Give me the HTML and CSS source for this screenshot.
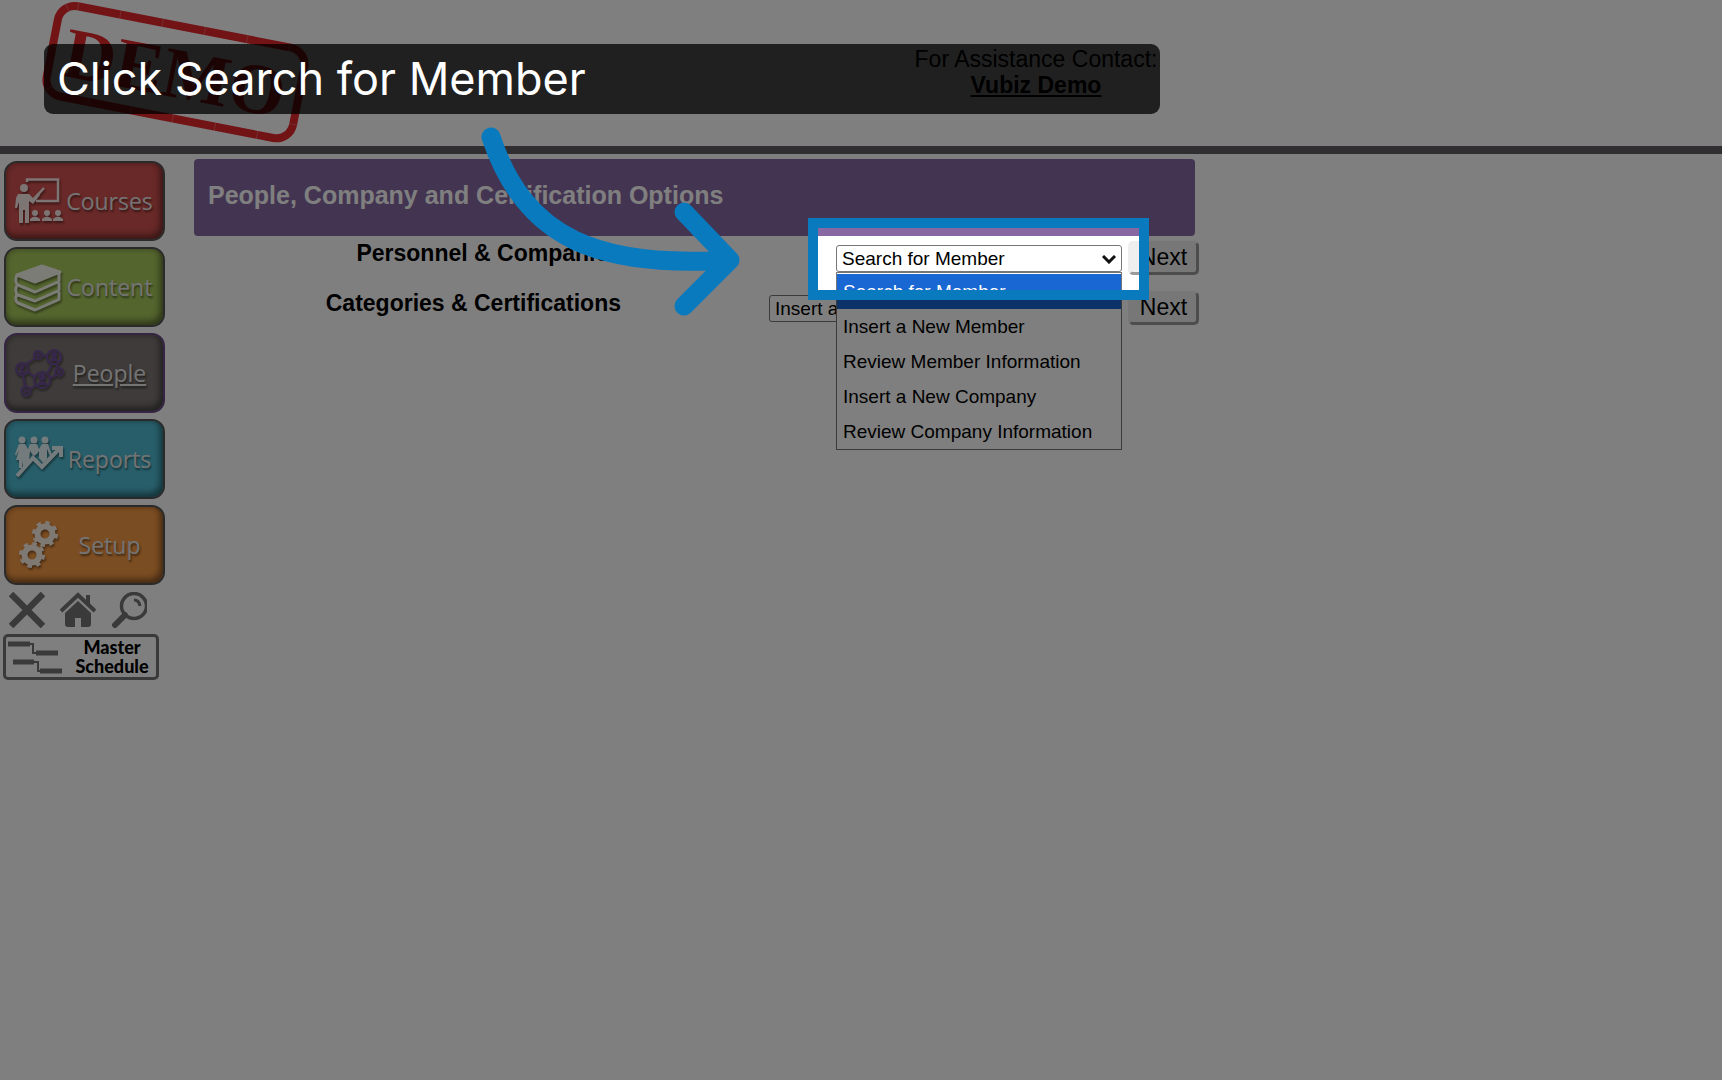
FILE: index.html
```html
<!DOCTYPE html>
<html lang="en">
<head>
<meta charset="utf-8">
<title>People, Company and Certification Options</title>
<link rel="stylesheet" href="styles.css">
</head>
<body>
<header class="topbar">
  <svg class="stamp" viewBox="0 0 320 146" role="img" aria-label="Demo">
    <g transform="rotate(11 175 72)">
      <rect x="50" y="26" width="251" height="92" rx="17" fill="none" stroke="#e4262c" stroke-width="8"/>
      <rect x="50" y="26" width="251" height="92" rx="17" fill="none" stroke="#fff" stroke-width="8" stroke-dasharray="1 42" opacity=".25"/>
      <text x="175" y="97" class="stamp-text" text-anchor="middle">DEMO</text>
    </g>
  </svg>
  <div class="contact">For Assistance Contact:<a href="#">Vubiz Demo</a></div>
</header>

<div class="layout">
  <nav class="side">
    <a class="tile red" href="#">
      <svg viewBox="0 0 50 50"><g fill="none" stroke="#fff" stroke-width="2.500"><path d="M13 6V3.500H44V25H22M18 25L30 12" /></g><g fill="#fff"><circle cx="10" cy="12" r="4"/><path d="M4 18H15L19 22L24 17L26 19L19 28L15 25V47H11V34H9V47H5V26L3 32H1L2 22Z"/><circle cx="21" cy="37" r="3"/><circle cx="33" cy="37" r="3"/><circle cx="44" cy="37" r="3"/><path d="M16 45V43Q21 38 26 43V45ZM28 45V43Q33 38 38 43V45ZM39 45V43Q44 38 49 43V45Z"/></g></svg>
      <span>Courses</span></a>
    <a class="tile green" href="#">
      <svg viewBox="0 0 50 50"><g fill="none" stroke="#fff" stroke-width="3" stroke-linejoin="round"><path fill="#fff" d="M3 13L28 4L46 10L21 20Z"/><path d="M3 13Q0 20 4 23L21 30L46 19M3 23Q0 30 4 33L21 39L46 28M3 32Q0 38 4 41L21 48L46 37M45 11V19M45 21V28M45 30V37"/></g></svg>
      <span>Content</span></a>
    <a class="tile dark" href="#" aria-current="page">
      <svg viewBox="0 0 50 50"><g fill="none" stroke="#6f499f" stroke-width="2"><circle cx="8" cy="21" r="6"/><circle cx="24" cy="7" r="4"/><circle cx="40" cy="9" r="7"/><circle cx="45" cy="24" r="4"/><circle cx="28" cy="32" r="8"/><circle cx="12" cy="43" r="4.500"/><path d="M12 16L21 10M28 7L33 8M42 16L44 20M14 24L21 29M9 27L11 38M16 41L22 37M33 26L38 16M36 30L42 27"/></g><g fill="#6f499f"><circle cx="8" cy="19" r="2.500"/><path d="M4 25Q8 19 12 25Z"/><circle cx="40" cy="7" r="3"/><path d="M35 13Q40 6 45 13Z"/><circle cx="28" cy="29" r="3.500"/><path d="M22 37Q28 29 34 37Z"/><circle cx="24" cy="7" r="2"/><circle cx="45" cy="24" r="2"/><circle cx="12" cy="43" r="2"/></g></svg>
      <span>People</span></a>
    <a class="tile blue" href="#">
      <svg viewBox="0 0 50 50"><g fill="#fff"><circle cx="8" cy="6" r="3.500"/><circle cx="20" cy="6" r="3.500"/><circle cx="31" cy="6" r="3.500"/><path d="M5 10H11L14 15L16 10H23L25 15L28 10H34L38 21L36 22L33 15V25L29 29L25 24V17L23 20L20 22L18 20L16 17L15 28L11 34H9V27L8 34H5V26H2L5 16L2 22L1 20Z"/></g><path d="M3 42L19 24L28 33L46 14M38 14H47V23" fill="none" stroke="#fff" stroke-width="4"/></svg>
      <span>Reports</span></a>
    <a class="tile orange" href="#">
      <svg viewBox="0 0 50 50"><g fill="none" stroke="#fff"><circle cx="31" cy="14" r="7.500" stroke-width="6"/><circle cx="31" cy="14" r="11" stroke-width="4" stroke-dasharray="4.320 4.320"/><circle cx="18" cy="35" r="7.500" stroke-width="6"/><circle cx="18" cy="35" r="11" stroke-width="4" stroke-dasharray="4.320 4.320"/></g></svg>
      <span>Setup</span></a>
    <div class="tools">
      <button type="button" aria-label="Close"><svg viewBox="0 0 36 36"><path d="M2 2L34 34M34 2L2 34" stroke="#777575" stroke-width="6.500"/></svg></button>
      <button type="button" aria-label="Home"><svg viewBox="0 0 36 36"><path d="M1 19L18 3L35 19M28 3V12" fill="none" stroke="#777575" stroke-width="4"/><path d="M5 21L18 9L31 21V32Q31 35 28 35H21V26H15V35H8Q5 35 5 32Z" fill="#777575"/></svg></button>
      <button type="button" aria-label="Search"><svg viewBox="0 0 36 36"><circle cx="23" cy="14" r="12.500" fill="none" stroke="#777575" stroke-width="3.500"/><path d="M23 8Q28 8 29 14" fill="none" stroke="#777575" stroke-width="3"/><path d="M14 23L4 33" stroke="#777575" stroke-width="6" stroke-linecap="round"/></svg></button>
    </div>
    <a class="schedule" href="#">
      <svg viewBox="0 0 54 36"><path d="M0 5H22M28 14H50M5 23H26M32 32H54" stroke="#777575" stroke-width="5"/><path d="M22 5H25V14H29M26 23H30V32H33" fill="none" stroke="#777575" stroke-width="2"/></svg>
      <span>Master<br>Schedule</span></a>
  </nav>

  <main class="content">
    <h1>People, Company and Certification Options</h1>
    <form class="row">
      <label for="personnel">Personnel &amp; Companies</label>
      <div class="picker">
        <select id="personnel" class="narrow"><option>Search for Member</option></select>
        <svg class="chevron" viewBox="0 0 14 9"><path d="M1 1L7 7L13 1" fill="none" stroke="#111" stroke-width="3"/></svg>
        <ul class="menu">
          <li class="on">Search for Member</li>
          <li>Insert a New Member</li>
          <li>Review Member Information</li>
          <li>Insert a New Company</li>
          <li>Review Company Information</li>
        </ul>
      </div>
      <button class="next" type="button">Next</button>
    </form>
    <form class="row">
      <label for="categories">Categories &amp; Certifications</label>
      <div class="picker"><select id="categories" class="wide"><option>Insert a New Category</option></select></div>
      <button class="next" type="button">Next</button>
    </form>
  </main>
</div>

<div class="guide">
  <div class="spotlight"></div>
  <div class="callout">Click Search for Member</div>
  <svg class="arrow" viewBox="0 0 270 200"><path d="M17 9C51 112 126 140 254 132M210 84L256 132L210 178" fill="none" stroke="#0a7abf" stroke-width="19" stroke-linecap="round" stroke-linejoin="round"/></svg>
</div>
</body>
</html>
```
FILE: styles.css
```css
* { box-sizing: border-box; }
body {
  margin: 0;
  min-height: 100vh;
  position: relative;
  overflow-x: hidden;
  background: #fff;
  color: #000;
  font-family: "Liberation Sans", Arial, sans-serif;
  font-size: 23px;
}
.topbar {
  display: flex;
  height: 154px;
  border-bottom: 8px solid #605c60;
}
.stamp { flex: none; width: 320px; height: 146px; }
.stamp-text { font: bold 72px "Liberation Serif", serif; fill: #e4262c; }
.contact {
  width: 250px;
  margin-left: 591px;
  padding-top: 46px;
  text-align: center;
  line-height: 26px;
  white-space: nowrap;
}
.contact a { display: block; color: inherit; font-weight: bold; }

.layout { display: flex; gap: 29px; padding: 5px 0 0 4px; }
.side { flex: none; width: 161px; padding-top: 2px; display: flex; flex-direction: column; gap: 6px; }
.tile {
  display: flex;
  align-items: center;
  height: 80px;
  padding: 0 8px;
  border: 2px solid #555;
  border-radius: 13px;
  color: #e8e8e8;
  font: 23px "Open Sans", "Noto Sans", sans-serif;
  text-decoration: none;
  text-shadow: 1px 2px 2px rgba(0, 0, 0, .5);
  box-shadow: inset -3px -4px 6px rgba(0, 0, 0, .45), inset 2px 2px 4px rgba(0, 0, 0, .15);
}
.tile svg { flex: none; width: 50px; height: 50px; opacity: .88; filter: drop-shadow(1px 2px 1px rgba(0, 0, 0, .5)); }
.tile span { flex: 1; text-align: center; }
.red { background: #d25250; }
.green { background: #a9ca5c; }
.dark { background: #7c7774; border-color: #6a4a86; text-decoration: underline; }
.blue { background: #4fbdd4; }
.orange { background: #f79a45; }

.tools { display: flex; gap: 15px; padding: 1px 5px 0; }
.tools button { width: 36px; height: 36px; padding: 0; border: 0; background: none; }
.tools svg { display: block; width: 36px; height: 36px; }
.schedule {
  display: flex;
  align-items: center;
  gap: 8px;
  width: 156px;
  height: 46px;
  margin-left: -1px;
  padding: 0 2px;
  border: 3px solid #777575;
  border-radius: 5px;
  color: #000;
  font: 900 18px/19px Lato, sans-serif;
  text-align: center;
  text-decoration: none;
}
.schedule svg { flex: none; width: 54px; height: 36px; }
.schedule span { flex: 1; }

.content { width: 1005px; }
h1 {
  width: 1001px;
  height: 77px;
  margin: 0 0 5px;
  padding-left: 14px;
  border-radius: 4px;
  background: #8768a2;
  color: #fff;
  font-size: 25px;
  line-height: 73px;
}
.row {
  display: grid;
  grid-template-columns: 427px 1fr 71px;
  column-gap: 6px;
  height: 50px;
  margin: 0;
}
.row label { height: 24px; line-height: 24px; text-align: right; font-weight: bold; }
.picker { position: relative; justify-self: end; padding-top: 4px; }
select {
  display: block;
  height: 27px;
  padding: 0 5px;
  appearance: none;
  border: 1px solid #767676;
  border-radius: 3px;
  background: #fff;
  color: #000;
  font: 19px "Liberation Sans", Arial, sans-serif;
}
.narrow { width: 286px; }
.wide { width: 353px; }
.chevron { position: absolute; top: 14px; right: 6px; width: 14px; height: 9px; pointer-events: none; }
.menu {
  position: absolute;
  z-index: 1;
  top: 31px;
  right: 0;
  width: 286px;
  margin: 0;
  padding: 1px 0 0;
  border: 1px solid #767676;
  background: #fff;
  list-style: none;
  font-size: 19px;
  line-height: 35px;
}
.menu li { padding-left: 6px; }
.menu .on { background: #1967d2; color: #fff; }
.next {
  width: 71px;
  height: 34px;
  padding: 0 0 3px;
  border: 3px outset #eee;
  border-radius: 5px;
  background: #efefef;
  font: 23px "Liberation Sans", Arial, sans-serif;
}

/* walkthrough layer drawn over the page */
.guide { position: absolute; z-index: 2; inset: 0; overflow: hidden; pointer-events: none; }
.spotlight {
  position: absolute;
  left: 808px;
  top: 218px;
  width: 341px;
  height: 82px;
  border: 10px solid #0a7abf;
  box-shadow: 0 0 0 3000px rgba(0, 0, 0, .5);
}
.callout {
  position: absolute;
  left: 44px;
  top: 44px;
  width: 1116px;
  height: 70px;
  padding-left: 13px;
  border-radius: 9px;
  background: rgba(0, 0, 0, .75);
  color: #fff;
  font: 45px/70px Inter, sans-serif;
}
.arrow { position: absolute; left: 474px; top: 128px; width: 270px; height: 200px; overflow: visible; }
```
